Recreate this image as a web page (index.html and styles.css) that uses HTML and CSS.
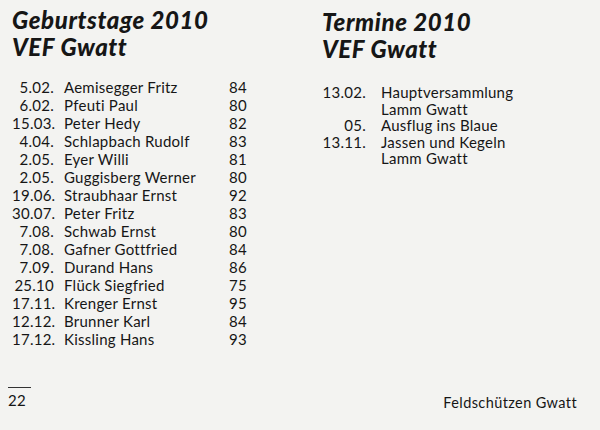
FILE: index.html
```html
<!DOCTYPE html>
<html lang="de">
<head>
<meta charset="utf-8">
<title>Geburtstage und Termine 2010 – VEF Gwatt</title>
<link rel="stylesheet" href="styles.css">
</head>
<body>
<div class="page">
  <div class="columns">
    <section class="col col-left">
      <h1 class="heading">Geburtstage 2010<br>VEF Gwatt</h1>
      <div class="birthdays">
        <span class="date">5.02.</span><span class="name">Aemisegger Fritz</span><span class="age">84</span>
        <span class="date">6.02.</span><span class="name">Pfeuti Paul</span><span class="age">80</span>
        <span class="date">15.03.</span><span class="name">Peter Hedy</span><span class="age">82</span>
        <span class="date">4.04.</span><span class="name">Schlapbach Rudolf</span><span class="age">83</span>
        <span class="date">2.05.</span><span class="name">Eyer Willi</span><span class="age">81</span>
        <span class="date">2.05.</span><span class="name">Guggisberg Werner</span><span class="age">80</span>
        <span class="date">19.06.</span><span class="name">Straubhaar Ernst</span><span class="age">92</span>
        <span class="date">30.07.</span><span class="name">Peter Fritz</span><span class="age">83</span>
        <span class="date">7.08.</span><span class="name">Schwab Ernst</span><span class="age">80</span>
        <span class="date">7.08.</span><span class="name">Gafner Gottfried</span><span class="age">84</span>
        <span class="date">7.09.</span><span class="name">Durand Hans</span><span class="age">86</span>
        <span class="date">25.10</span><span class="name">Flück Siegfried</span><span class="age">75</span>
        <span class="date">17.11.</span><span class="name">Krenger Ernst</span><span class="age">95</span>
        <span class="date">12.12.</span><span class="name">Brunner Karl</span><span class="age">84</span>
        <span class="date">17.12.</span><span class="name">Kissling Hans</span><span class="age">93</span>
      </div>
    </section>
    <section class="col col-right">
      <h1 class="heading">Termine 2010<br>VEF Gwatt</h1>
      <div class="events">
        <span class="date">13.02.</span><span class="event">Hauptversammlung<br>Lamm Gwatt</span>
        <span class="date">05.</span><span class="event">Ausflug ins Blaue</span>
        <span class="date">13.11.</span><span class="event">Jassen und Kegeln<br>Lamm Gwatt</span>
      </div>
    </section>
  </div>
  <footer class="footer">
    <div class="pagenum">
      <div class="rule"></div>
      <div class="num">22</div>
    </div>
    <div class="club">Feldschützen Gwatt</div>
  </footer>
</div>
</body>
</html>
```

FILE: styles.css
```css
html, body {
  margin: 0;
  padding: 0;
}

body {
  background: #f3f3f1;
  color: #161616;
  font-family: Lato, "Open Sans", "DejaVu Sans", sans-serif;
}

.page {
  width: 600px;
  height: 430px;
  display: flex;
  flex-direction: column;
  overflow: hidden;
}

.columns {
  display: grid;
  grid-template-columns: 310px 1fr;
}

.col {
  padding-left: 12px;
}

.heading {
  margin: 0;
  font-size: 24px;
  line-height: 27px;
  font-weight: 900;
  font-style: italic;
  letter-spacing: 0.6px;
}

.col-left .heading {
  padding-top: 6px;
}

.col-right .heading {
  padding-top: 8px;
}

.birthdays {
  display: grid;
  grid-template-columns: 42px 155px auto;
  column-gap: 10px;
  margin-top: 18px;
  font-size: 15px;
  line-height: 18px;
  letter-spacing: 0.25px;
}

.events {
  display: grid;
  grid-template-columns: 44px auto;
  column-gap: 15px;
  margin-top: 22px;
  font-size: 15px;
  line-height: 16.5px;
  letter-spacing: 0.25px;
}

.date {
  text-align: right;
}

.footer {
  margin-top: auto;
  display: flex;
  justify-content: space-between;
  align-items: flex-start;
  padding: 0 23px 18px 8px;
}

.rule {
  width: 23px;
  height: 1px;
  background: #333;
}

.num {
  margin-top: 3px;
  font-size: 15px;
  line-height: 18px;
  letter-spacing: 0.3px;
}

.club {
  margin-top: 7px;
  font-size: 14.5px;
  line-height: 18px;
  letter-spacing: 0.4px;
}
```
